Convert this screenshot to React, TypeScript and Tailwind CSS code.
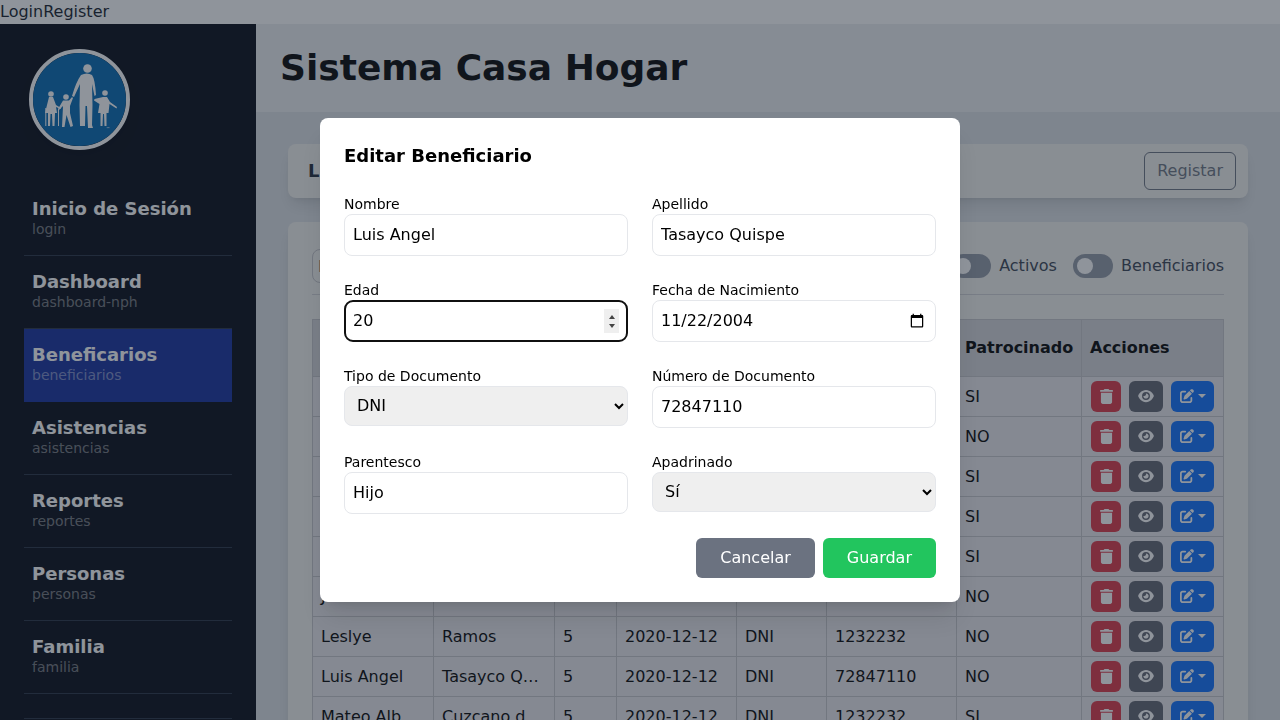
const navItems = [
  { title: 'Inicio de Sesión', sub: 'login' },
  { title: 'Dashboard', sub: 'dashboard-nph' },
  { title: 'Beneficarios', sub: 'beneficiarios', active: true },
  { title: 'Asistencias', sub: 'asistencias' },
  { title: 'Reportes', sub: 'reportes' },
  { title: 'Personas', sub: 'personas' },
  { title: 'Familia', sub: 'familia' },
];

const rows = [
  { patrocinado: 'SI' },
  { patrocinado: 'NO' },
  { patrocinado: 'SI' },
  { patrocinado: 'SI' },
  { patrocinado: 'SI' },
  { nombre: 'J', patrocinado: 'NO' },
  { nombre: 'Leslye', apellido: 'Ramos', edad: '5', fecha: '2020-12-12', tipo: 'DNI', numero: '1232232', patrocinado: 'NO' },
  { nombre: 'Luis Angel', apellido: 'Tasayco Quispe', edad: '5', fecha: '2020-12-12', tipo: 'DNI', numero: '72847110', patrocinado: 'NO' },
  { nombre: 'Mateo Alb', apellido: 'Cuzcano d', edad: '5', fecha: '2020-12-12', tipo: 'DNI', numero: '1232232', patrocinado: 'SI' },
];

function Logo() {
  return (
    <svg viewBox="33 53 93 93" className="w-full h-full">
      <circle cx="79.500" cy="99.500" r="48" fill="#0066b0" />
      <g fill="#ffffff">
        {/* adult */}
        <circle cx="87.500" cy="68.500" r="4.300" />
        <path d="M81 75 Q87 72 92 75 Q95 79 96 95 L94.500 96 L92 84 L92.500 105 L92 125 L93 128 L88 128 L87 106 L85.500 106 L85 126 L80 126 L79.500 105 L80 84 L74 97 L72 96 Q76 82 81 75 Z" />
        {/* woman with canes */}
        <circle cx="51" cy="94" r="2.800" />
        <path d="M49 97 L53 97 L56 105 L61 108 L60.500 109 L56 107 L57 113 L55 113 L54.500 126 L52.500 126 L52 114 L50.500 114 L50 126 L48 126 L48 113 L45 113 Z" />
        <rect x="45.300" y="108" width="1" height="18" />
        <rect x="58" y="109" width="1" height="17" />
        {/* boy */}
        <circle cx="66" cy="97" r="2.800" />
        <path d="M63 100.500 L69 100.500 L72 97 L73 98 L70 106 L70 113 L73 126 L70.500 127 L66.500 115 L64.500 127 L62 127 L63 106 L59 110 L58 109 Z" />
        {/* girl */}
        <circle cx="105" cy="93" r="2.800" />
        <path d="M103 97 L107 97 L110 102 L117 107 L116.500 108.500 L109.500 104 L108.500 113 L106.500 113 L106.500 126 L104.500 126 L104 114 L103 114 L102.500 126 L100.500 126 L100.500 113 L98 113 L99.500 104 L94 100.500 L94.500 99 Z" />
      </g>
      <text x="106" y="130" fontSize="4" fill="#ffffff">™</text>
    </svg>
  );
}

function Sidebar() {
  return (
    <aside className="w-64 h-full shrink-0 bg-gray-950 px-6 overflow-hidden">
      <div className="pt-[25px] pb-[33px] pl-[5px]">
        <div className="w-[101px] h-[101px] rounded-full border-4 border-white shadow-lg overflow-hidden">
          <Logo />
        </div>
      </div>
      <ul>
        {navItems.map((item) => (
          <li
            key={item.title}
            className={`pt-[14px] pb-[17px] px-2 border-b ${item.active ? 'bg-[#122c9c] border-[#122c9c]' : 'border-[#252f41]'}`}
          >
            <div className="text-lg leading-[23px] font-bold text-white">{item.title}</div>
            <div className="text-sm leading-[18px] text-white/45">{item.sub}</div>
          </li>
        ))}
        <li className="h-[25px] border-b border-[#252f41]" />
      </ul>
    </aside>
  );
}

function Toggle({ label }: { label: string }) {
  return (
    <div className="flex items-center gap-2">
      <span className="w-10 h-6 rounded-full bg-[#9198a5] flex items-center pl-1">
        <span className="w-4 h-4 rounded-full bg-white" />
      </span>
      <span className="text-[#374151]">{label}</span>
    </div>
  );
}

function ActionButtons() {
  return (
    <div className="flex gap-2 -mt-px">
      <button className="w-[30px] h-[31px] ml-px rounded-md bg-[#dc3545] flex items-center justify-center">
        <svg viewBox="0 0 448 512" className="w-[13px] h-[15px]" fill="#fff">
          <path d="M135.2 17.7C140.6 6.8 151.7 0 163.8 0H284.2c12.1 0 23.2 6.8 28.6 17.7L320 32h96c17.7 0 32 14.3 32 32s-14.3 32-32 32H32C14.3 96 0 81.7 0 64S14.3 32 32 32h96l7.2-14.3zM32 128H416V448c0 35.3-28.7 64-64 64H96c-35.3 0-64-28.7-64-64V128z" />
        </svg>
      </button>
      <button className="w-[34px] h-[31px] rounded-md bg-[#5f626f] flex items-center justify-center">
        <svg viewBox="0 0 576 512" className="w-4 h-[14px]" fill="#fff">
          <path d="M288 32c-80.8 0-145.5 36.800-192.600 80.600C48.600 156 17.300 208 2.500 243.700c-3.300 7.900-3.300 16.700 0 24.600C17.300 304 48.600 356 95.400 399.400C142.500 443.200 207.200 480 288 480s145.500-36.800 192.600-80.600c46.800-43.500 78.100-95.400 93-131.100c3.300-7.900 3.300-16.700 0-24.600c-14.900-35.700-46.200-87.700-93-131.100C433.500 68.800 368.800 32 288 32zM144 256a144 144 0 1 1 288 0 144 144 0 1 1 -288 0zm144-64c0 35.300-28.700 64-64 64c-7.100 0-13.900-1.200-20.300-3.300c-5.500-1.800-11.900 1.600-11.700 7.400c.3 6.900 1.300 13.800 3.200 20.700c13.700 51.200 66.400 81.600 117.600 67.900s81.600-66.400 67.900-117.600c-11.100-41.500-47.800-69.400-88.600-71.100c-5.800-.2-9.200 6.100-7.400 11.700c2.100 6.400 3.300 13.200 3.300 20.300z" />
        </svg>
      </button>
      <button className="w-[43px] h-[31px] rounded-md bg-[#0d6efd] flex items-center justify-center gap-1">
        <svg viewBox="0 0 512 512" className="w-[14px] h-[14px]" fill="#fff">
          <path d="M471.600 21.700c-21.900-21.900-57.300-21.900-79.200 0L362.300 51.700l97.900 97.900 30.100-30.100c21.900-21.900 21.900-57.300 0-79.200L471.600 21.700zm-299.200 220c-6.100 6.100-10.800 13.600-13.500 21.900l-29.600 88.800c-2.900 8.600-.6 18.100 5.800 24.600s15.900 8.700 24.600 5.800l88.800-29.600c8.200-2.700 15.700-7.400 21.900-13.500L437.700 172.300 339.700 74.300 172.400 241.700zM96 64C43 64 0 107 0 160V416c0 53 43 96 96 96H352c53 0 96-43 96-96V320c0-17.700-14.300-32-32-32s-32 14.300-32 32v96c0 17.700-14.300 32-32 32H96c-17.700 0-32-14.300-32-32V160c0-17.700 14.300-32 32-32h96c17.700 0 32-14.300 32-32s-14.300-32-32-32H96z" />
        </svg>
        <span className="border-x-[4px] border-x-transparent border-t-[4px] border-t-white" />
      </button>
    </div>
  );
}

function BeneficiaryTable() {
  const cell = 'border border-[#c4c4c8] px-2';
  return (
    <table className="table-fixed border-collapse w-[911px]">
      <colgroup>
        <col className="w-[121px]" />
        <col className="w-[121px]" />
        <col className="w-[62px]" />
        <col className="w-[120px]" />
        <col className="w-[90px]" />
        <col className="w-[130px]" />
        <col className="w-[125px]" />
        <col className="w-[142px]" />
      </colgroup>
      <thead>
        <tr className="h-[57px] bg-[#d5d5d9] text-left">
          {['Nombre', 'Apellido', 'Edad', 'Fecha', 'Tipo', 'Número', 'Patrocinado', 'Acciones'].map((h) => (
            <th key={h} className={`${cell} font-bold text-black whitespace-nowrap`}>{h}</th>
          ))}
        </tr>
      </thead>
      <tbody>
        {rows.map((r, i) => (
          <tr key={i} className="h-10 bg-[#ebe9ed] text-black">
            <td className={`${cell} truncate`}>{r.nombre}</td>
            <td className={`${cell} truncate`}>{r.apellido}</td>
            <td className={cell}>{r.edad}</td>
            <td className={cell}>{r.fecha}</td>
            <td className={cell}>{r.tipo}</td>
            <td className={cell}>{r.numero}</td>
            <td className={cell}>{r.patrocinado}</td>
            <td className={cell}><ActionButtons /></td>
          </tr>
        ))}
      </tbody>
    </table>
  );
}

function Field({ label, children }: { label: string; children: React.ReactNode }) {
  return (
    <div>
      <label className="block text-sm leading-5 text-black">{label}</label>
      {children}
    </div>
  );
}

const inputClass = 'w-full border border-[#e5e7eb] rounded-lg p-2 leading-6 text-black';
const selectClass = 'w-full h-10 border border-[#e5e7eb] rounded-lg px-2 pb-[2px] bg-[#efefef] text-black';

function EditModal() {
  return (
    <div className="fixed inset-0 bg-[#1f2937]/50 flex justify-center pt-[118px]">
      <div className="w-160 h-[484px] bg-white rounded-lg shadow-xl p-6">
        <h2 className="text-lg leading-7 font-bold text-black mb-6">Editar Beneficiario</h2>
        <div className="grid grid-cols-2 gap-x-6 gap-y-6">
          <Field label="Nombre"><input className={inputClass} defaultValue="Luis Angel" /></Field>
          <Field label="Apellido"><input className={inputClass} defaultValue="Tasayco Quispe" /></Field>
          <Field label="Edad">
            <div className="relative">
              <input
                autoFocus
                type="number"
                className={`${inputClass} [&::-webkit-inner-spin-button]:appearance-none`}
                defaultValue="20"
              />
              {/* spinner box */}
              <span className="absolute right-[9px] top-[9px] w-[15px] h-6 bg-[#efefef] flex flex-col items-center justify-center gap-[5px]">
                <span className="border-x-[3.5px] border-x-transparent border-b-[4px] border-b-[#444]" />
                <span className="border-x-[3.5px] border-x-transparent border-t-[4px] border-t-[#444]" />
              </span>
            </div>
          </Field>
          <Field label="Fecha de Nacimiento">
            <input
              type="date"
              className={`${inputClass} [&::-webkit-datetime-edit-month-field]:p-0 [&::-webkit-datetime-edit-day-field]:p-0 [&::-webkit-datetime-edit-year-field]:p-0`}
              defaultValue="2004-11-22"
            />
          </Field>
          <Field label="Tipo de Documento">
            <select className={selectClass} defaultValue="DNI"><option>DNI</option></select>
          </Field>
          <Field label="Número de Documento"><input className={inputClass} defaultValue="72847110" /></Field>
          <Field label="Parentesco"><input className={inputClass} defaultValue="Hijo" /></Field>
          <Field label="Apadrinado">
            <select className={selectClass} defaultValue="Sí"><option>Sí</option></select>
          </Field>
        </div>
        <div className="flex justify-end gap-2 mt-6">
          <button className="h-10 px-6 rounded-md bg-[#6b7280] text-white">Cancelar</button>
          <button className="h-10 px-6 rounded-md bg-[#22c55e] text-white">Guardar</button>
        </div>
      </div>
    </div>
  );
}

export default function App() {
  return (
    <div className="h-screen overflow-hidden flex flex-col bg-white font-['DejaVu_Sans',sans-serif] text-[#111827]">
      <nav className="h-6 shrink-0 leading-6 flex">
        <a>Login</a>
        <a>Register</a>
      </nav>
      <div className="flex flex-1 min-h-0">
        <Sidebar />
        <main className="flex-1 min-w-0 bg-[#dde1e5] overflow-hidden">
          <header className="h-[88px] bg-[#eceef1] flex items-center px-6">
            <h1 className="text-4xl font-bold text-black">Sistema Casa Hogar</h1>
          </header>
          <div className="px-8 pt-8 flex flex-col gap-6">
            <section className="h-[54px] shrink-0 bg-[#f3f2ee] rounded-lg shadow-lg flex items-center justify-between pl-5 pr-3">
              <h2 className="text-lg font-bold text-[#1f2937]">Lista de Beneficiarios</h2>
              <button className="h-[38px] px-3 border border-[#6b7280] rounded-md text-[#6b7280]">Registar</button>
            </section>
            <section className="bg-[#f3f2ee] rounded-lg shadow-lg p-6">
              <div className="h-[49px] pt-[3px] flex items-start justify-between border-b border-[#d1d1d4] mb-6">
                <input className="w-64 h-[34px] border border-[#c4c4c8] rounded-lg px-[5px] text-[#374151]" defaultValue="Buscar" />
                <div className="flex items-center gap-4 h-[34px]">
                  <Toggle label="Activos" />
                  <Toggle label="Beneficiarios" />
                </div>
              </div>
              <BeneficiaryTable />
            </section>
          </div>
        </main>
      </div>
      <EditModal />
    </div>
  );
}
